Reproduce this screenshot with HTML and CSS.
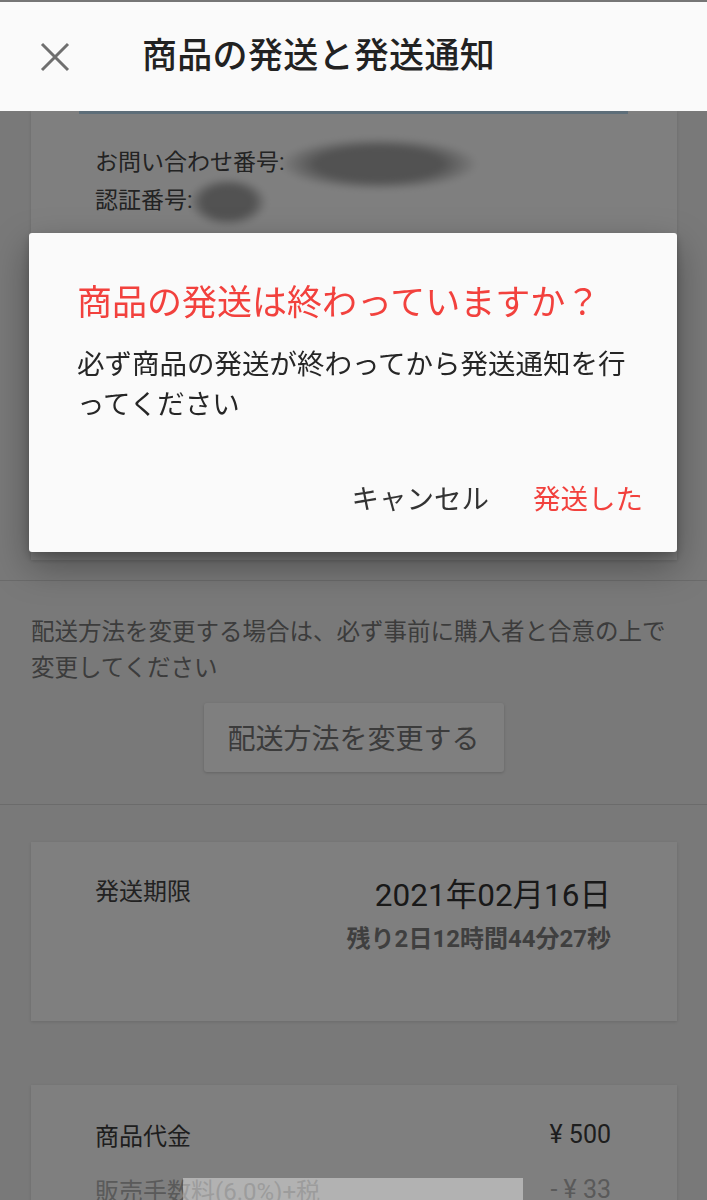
FILE: index.html
```html
<!DOCTYPE html>
<html lang="ja">
<head>
<meta charset="utf-8">
<title>商品の発送と発送通知</title>
<link rel="stylesheet" href="styles.css">
</head>
<body>
<div class="topline"></div>
<header class="appbar">
  <svg class="close" width="30" height="30" viewBox="0 0 30 30" aria-hidden="true">
    <path d="M2 2 L28 28 M28 2 L2 28" stroke="#6f6f6f" stroke-width="3" fill="none"/>
  </svg>
  <h1 class="appbar-title">商品の発送と発送通知</h1>
</header>

<main class="page">
  <section class="card card-info">
    <div class="info-strip"></div>
    <div class="info-lines">
      <p class="info-line">お問い合わせ番号:<span class="blob blob-long"></span></p>
      <p class="info-line">認証番号:<span class="blob blob-short"></span></p>
    </div>
  </section>

  <section class="change">
    <p class="change-note">配送方法を変更する場合は、必ず事前に購入者と合意の上で変更してください</p>
    <div class="change-action">
      <button class="change-btn">配送方法を変更する</button>
    </div>
  </section>

  <section class="card card-deadline">
    <div class="deadline-label">発送期限</div>
    <div class="deadline-values">
      <div class="deadline-date">2021年02月16日</div>
      <div class="deadline-remain">残り2日12時間44分27秒</div>
    </div>
  </section>

  <section class="card card-price">
    <div class="price-row">
      <span class="price-label">商品代金</span>
      <span class="price-value">¥ 500</span>
    </div>
    <div class="price-row price-row-muted">
      <span class="price-label">販売手数料(6.0%)+税</span>
      <span class="price-value">- ¥ 33</span>
    </div>
  </section>
</main>

<div class="scrim"></div>
<div class="toast"></div>

<div class="dialog" role="dialog">
  <h2 class="dialog-title">商品の発送は終わっていますか？</h2>
  <p class="dialog-body">必ず商品の発送が終わってから発送通知を行ってください</p>
  <div class="dialog-actions">
    <button class="dialog-btn dialog-btn-cancel">キャンセル</button>
    <button class="dialog-btn dialog-btn-ok">発送した</button>
  </div>
</div>
</body>
</html>
```

FILE: styles.css
```css
* { box-sizing: border-box; }

html, body {
  margin: 0;
  padding: 0;
}

body {
  width: 707px;
  min-height: 1200px;
  background: #f2f2f2;
  font-family: Roboto, "Noto Sans CJK JP", sans-serif;
  color: #222;
  overflow: hidden;
}

p, h1, h2 { margin: 0; font-weight: normal; }

button {
  font-family: inherit;
  border: none;
  background: none;
  padding: 0;
  cursor: pointer;
}

.topline {
  position: relative;
  z-index: 3;
  height: 2px;
  background: #767676;
}

.appbar {
  position: relative;
  z-index: 3;
  height: 109px;
  background: #fafafa;
  display: flex;
  align-items: center;
  padding-left: 40px;
}

.close { display: block; flex: none; }

.appbar-title {
  margin-left: 72px;
  font-size: 35px;
  font-weight: 500;
  color: #222;
  line-height: 1;
  letter-spacing: 0.3px;
}

.page {
  background: #f2f2f2;
}

.card {
  background: #ffffff;
  margin: 0 30px 0 31px;
  box-shadow: 0 1px 3px rgba(0, 0, 0, 0.12);
}

.card-info {
  padding: 0 49px 341px 48px;
}

.info-strip {
  height: 3px;
  background: #bcdcf2;
}

.info-lines {
  padding-top: 30px;
  padding-left: 16px;
}

.info-line {
  font-size: 23px;
  line-height: 37px;
  color: #464646;
  white-space: nowrap;
}

.blob {
  display: inline-block;
  vertical-align: middle;
  margin: -8px 0 -8px -4px;
  border-radius: 50%;
  background: radial-gradient(ellipse at center, #a4a4a4 45%, rgba(164, 164, 164, 0) 72%);
  filter: blur(3px);
}

.blob-long { width: 196px; height: 52px; }
.blob-short { width: 78px; height: 48px; }

.change {
  margin-top: 20px;
  border-top: 1px solid #d6d6d6;
  border-bottom: 1px solid #d6d6d6;
  padding: 33px 31px 32px;
}

.change-note {
  font-size: 23.5px;
  line-height: 36px;
  color: #787878;
}

.change-action {
  margin-top: 17px;
  display: flex;
  justify-content: center;
}

.change-btn {
  width: 300px;
  height: 69px;
  background: #fefefe;
  border-radius: 3px;
  box-shadow: 0 1px 3px rgba(0, 0, 0, 0.18);
  font-size: 28px;
  color: #767676;
}

.card-deadline {
  margin-top: 37px;
  height: 179px;
  padding: 35px 66px 0 64px;
  display: flex;
  justify-content: space-between;
  align-items: flex-start;
}

.deadline-label {
  font-size: 24px;
  line-height: 30px;
  color: #444;
}

.deadline-values {
  text-align: right;
}

.deadline-date {
  font-size: 31.5px;
  line-height: 38px;
  color: #333;
}

.deadline-remain {
  margin-top: 9px;
  font-size: 24px;
  line-height: 30px;
  font-weight: bold;
  color: #7e7e7e;
}

.card-price {
  margin-top: 64px;
  height: 200px;
  padding: 32px 66px 0 64px;
}

.price-row {
  display: flex;
  justify-content: space-between;
  align-items: center;
  height: 36px;
  font-size: 25px;
  color: #3c3c3c;
}

.price-label { font-size: 24px; }

.price-row + .price-row { margin-top: 19px; }

.price-row-muted { color: #b4b4b4; }

.scrim {
  position: fixed;
  inset: 0;
  z-index: 2;
  background: rgba(0, 0, 0, 0.5);
}

.toast {
  position: fixed;
  left: 183px;
  top: 1178px;
  width: 340px;
  height: 40px;
  z-index: 4;
  background: rgba(255, 255, 255, 0.4);
}

.dialog {
  position: fixed;
  left: 29px;
  top: 233px;
  width: 648px;
  height: 319px;
  z-index: 5;
  background: #fafafa;
  border-radius: 3px;
  box-shadow: 0 14px 36px rgba(0, 0, 0, 0.35), 0 4px 10px rgba(0, 0, 0, 0.2);
  padding: 50px 17px 27px 48px;
  display: flex;
  flex-direction: column;
}

.dialog-title {
  font-size: 35px;
  line-height: 41px;
  color: #f2413d;
  white-space: nowrap;
}

.dialog-body {
  margin-top: 21px;
  padding-right: 30px;
  font-size: 27.5px;
  line-height: 40px;
  color: #262626;
  line-break: loose;
}

.dialog-actions {
  margin-top: auto;
  display: flex;
  justify-content: flex-end;
  gap: 10px;
}

.dialog-btn {
  height: 56px;
  padding: 0 17px;
  font-size: 27.5px;
}

.dialog-btn-cancel { color: #333; }
.dialog-btn-ok { color: #f2413d; }
```
